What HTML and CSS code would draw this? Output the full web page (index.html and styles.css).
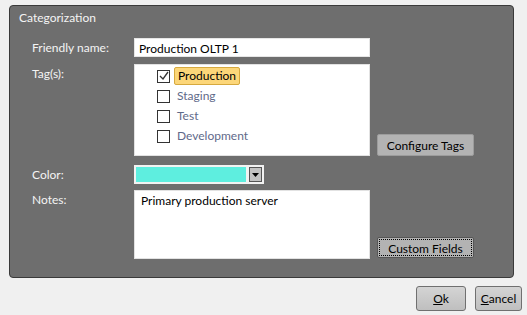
FILE: index.html
```html
<!DOCTYPE html>
<html>
<head>
    <meta charset='utf-8'>
    <title>Categorization</title>
    <link rel="stylesheet" href="styles.css">
</head>
<body>
    <div class="panel">
        <div class="title">Categorization</div>
        <div class="form">
            <label class="lbl">Friendly name:</label>
            <div class="textbox">Production OLTP 1</div>
            <div></div>

            <label class="lbl lbl-tags">Tag(s):</label>
            <div class="taglist">
                <div class="tag">
                    <span class="check on">
                        <svg width="10" height="10" viewBox="0 0 10 10"><path d="M1 5 L4 8 L9 1" fill="none" stroke="#333" stroke-width="1.3"/></svg>
                    </span>
                    <span class="tagname sel">Production</span>
                </div>
                <div class="tag"><span class="check"></span><span class="tagname">Staging</span></div>
                <div class="tag"><span class="check"></span><span class="tagname">Test</span></div>
                <div class="tag"><span class="check"></span><span class="tagname">Development</span></div>
            </div>
            <div class="side"><button class="btn">Configure Tags</button></div>

            <label class="lbl lbl-color">Color:</label>
            <div class="colorpick">
                <span class="swatch"></span>
                <span class="drop"><svg width="7" height="4" viewBox="0 0 7 4"><path d="M0 0 H7 L3.5 4 Z" fill="#000"/></svg></span>
            </div>
            <div></div>

            <label class="lbl lbl-notes">Notes:</label>
            <div class="notes">Primary production server</div>
            <div class="side"><button class="btn focus"><span>Custom Fields</span></button></div>
        </div>
    </div>
    <div class="actions">
        <button class="dlg"><u>O</u>k</button>
        <button class="dlg"><u>C</u>ancel</button>
    </div>
</body>
</html>
```

FILE: styles.css
```css
body {
    margin: 0;
    padding: 5px 13px 0 9px;
    background-color: #f0f0f0;
    font-family: Lato, "Noto Sans", sans-serif;
    font-size: 12px;
    width: 505px;
}
.panel {
    background-color: #6e6e6e;
    border: 1px solid #3a3a3a;
    border-radius: 4px;
    padding: 2px 0 18px 9px;
    color: #f4f4f4;
}
.title {
    height: 20px;
    line-height: 20px;
}
.form {
    display: grid;
    grid-template-columns: 102px 236px 104px;
    margin-top: 10px;
    margin-left: 13px;
}
.lbl {
    line-height: 19px;
}
.lbl-tags {
    margin-top: 7px;
}
.lbl-color {
    margin-top: 9px;
}
.lbl-notes {
    margin-top: 6px;
}
.textbox {
    background: #fff;
    color: #000;
    height: 19px;
    line-height: 19px;
    padding-left: 4px;
    border: 1px solid #e6e6e6;
    box-sizing: border-box;
}
.taglist {
    margin-top: 7px;
    height: 92px;
    background: #fff;
    border: 1px solid #e2e2e2;
    box-sizing: border-box;
    padding: 1px 0 0 22px;
}
.tag {
    display: flex;
    align-items: center;
    height: 20px;
}
.check {
    width: 11px;
    height: 11px;
    border: 1px solid #333;
    display: flex;
    align-items: center;
    justify-content: center;
    margin-right: 4px;
}
.tagname {
    color: #5f6a8a;
    padding: 0 3px;
    line-height: 16px;
}
.tagname.sel {
    background: #fcd679;
    border: 1px solid #d6a93e;
    border-radius: 2px;
    color: #000;
}
.side {
    display: flex;
    align-items: flex-end;
    padding-left: 7px;
}
.taglist + .side {
    margin-top: 7px;
}
.notes + .side {
    margin-top: 6px;
    padding-bottom: 1px;
}
.btn {
    font: inherit;
    color: #000;
    background: #b3b3b3;
    border: 1px solid #9c9c9c;
    border-radius: 2px;
    height: 22px;
    width: 98px;
    padding: 0;
}
.btn.focus {
    width: 97px;
    height: 21px;
    border-color: #555;
    padding: 1px;
}
.btn.focus span {
    display: block;
    height: 100%;
    line-height: 17px;
    border: 1px dotted #000;
    box-sizing: border-box;
}
.colorpick {
    margin-top: 9px;
    width: 130px;
    height: 19px;
    border: 2px solid #f2f2f2;
    box-sizing: border-box;
    display: flex;
    background: #f2f2f2;
}
.swatch {
    flex: 1;
    background: #5eeedf;
    margin-right: 3px;
}
.drop {
    width: 13px;
    background: #c2c2c2;
    border: 1px solid #555;
    box-sizing: border-box;
    display: flex;
    align-items: center;
    justify-content: center;
}
.notes {
    margin-top: 6px;
    height: 69px;
    background: #fff;
    color: #000;
    border: 1px solid #e2e2e2;
    box-sizing: border-box;
    padding: 1px 6px;
    line-height: 17px;
}
.actions {
    display: flex;
    justify-content: flex-end;
    gap: 9px;
    margin-top: 8px;
    margin-right: -8px;
}
.dlg {
    font: inherit;
    color: #000;
    height: 25px;
    border: 1px solid #707070;
    border-radius: 3px;
    background: linear-gradient(#d4d4d4, #bfbfbf);
    padding: 0;
}
.dlg:first-child {
    width: 50px;
}
.dlg:last-child {
    width: 47px;
}
```
